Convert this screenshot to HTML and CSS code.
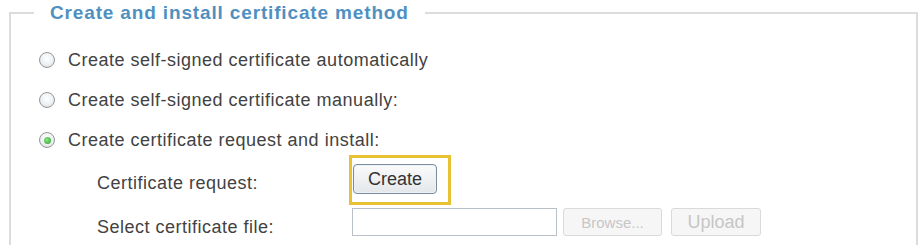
FILE: index.html
```html
<!DOCTYPE html>
<html>
<head>
<meta charset="utf-8">
<link rel="stylesheet" href="styles.css">
</head>
<body>
<fieldset class="method">
  <legend class="method-title">Create and install certificate method</legend>
  <div class="opt"><span class="radio"></span><span class="opt-label">Create self-signed certificate automatically</span></div>
  <div class="opt"><span class="radio"></span><span class="opt-label">Create self-signed certificate manually:</span></div>
  <div class="opt"><span class="radio checked"></span><span class="opt-label">Create certificate request and install:</span></div>
  <div class="sub">
    <div class="sub-label">Certificate request:</div>
    <div class="sub-ctrl"><span class="highlight"><span class="btn create">Create</span></span></div>
    <div class="sub-label file-label">Select certificate file:</div>
    <div class="sub-ctrl file-row"><span class="file-input"></span><span class="btn disabled browse">Browse...</span><span class="btn disabled upload">Upload</span></div>
  </div>
</fieldset>
</body>
</html>
```
FILE: styles.css
```css
html, body {
  margin: 0;
  padding: 0;
  background: #ffffff;
}
body {
  font-family: "Liberation Sans", Arial, sans-serif;
  color: #424242;
  width: 920px;
  height: 245px;
  overflow: hidden;
}
.method {
  margin: 2px 2px 0 9px;
  padding: 16px 0 20px 28px;
  border: 2px solid #dcdcdc;
  min-height: 250px;
}
.method-title {
  margin-left: -5px;
  padding: 0 16px;
  font-size: 19px;
  font-weight: bold;
  line-height: 22px;
  color: #5090c0;
  letter-spacing: 0.85px;
}
.opt {
  display: flex;
  align-items: center;
  height: 40px;
}
.radio {
  box-sizing: border-box;
  width: 16px;
  height: 16px;
  border-radius: 50%;
  border: 1.5px solid #92989d;
  background: radial-gradient(circle at 50% 40%, #ffffff 0%, #edf0f2 55%, #d0d5d9 100%);
  margin-right: 13px;
  display: flex;
  align-items: center;
  justify-content: center;
}
.radio.checked::after {
  content: "";
  width: 7px;
  height: 7px;
  border-radius: 50%;
  background: radial-gradient(circle at 40% 40%, #8ae884, #2f9a34);
}
.opt-label {
  font-size: 18px;
  letter-spacing: 0.5px;
}
.sub {
  display: grid;
  grid-template-columns: 252px auto;
  row-gap: 3px;
  margin-left: 58px;
  margin-top: -5px;
  align-items: center;
}
.sub-label {
  font-size: 18px;
  line-height: 18px;
  letter-spacing: 0.5px;
  padding-top: 6px;
}
.sub-label.file-label {
  padding-top: 10px;
}
.sub-ctrl {
  display: flex;
  align-items: center;
}
.highlight {
  display: inline-flex;
  border: 3px solid #e8c232;
  padding: 6px 11px 8px 1px;
}
.btn {
  box-sizing: border-box;
  display: inline-flex;
  align-items: center;
  justify-content: center;
  height: 30px;
  padding: 0 8px;
  font-size: 18px;
  color: #333;
  border: 1px solid #7a8ca0;
  border-radius: 4px;
  background: linear-gradient(#fbfbfb, #e4e7ea);
  box-shadow: inset 0 0 0 1px #eef2f6;
}
.btn.create {
  width: 84px;
}
.file-input {
  box-sizing: border-box;
  width: 205px;
  height: 28px;
  margin-left: 3px;
  border: 1px solid #b9c0c7;
  background: #fff;
}
.btn.disabled {
  height: 28px;
  color: #c6c6c6;
  border-color: #dadada;
  border-radius: 3px;
  background: #f6f6f6;
  box-shadow: none;
}
.browse {
  width: 99px;
  margin-left: 6px;
  font-size: 15px;
}
.upload {
  width: 90px;
  margin-left: 9px;
}
```
